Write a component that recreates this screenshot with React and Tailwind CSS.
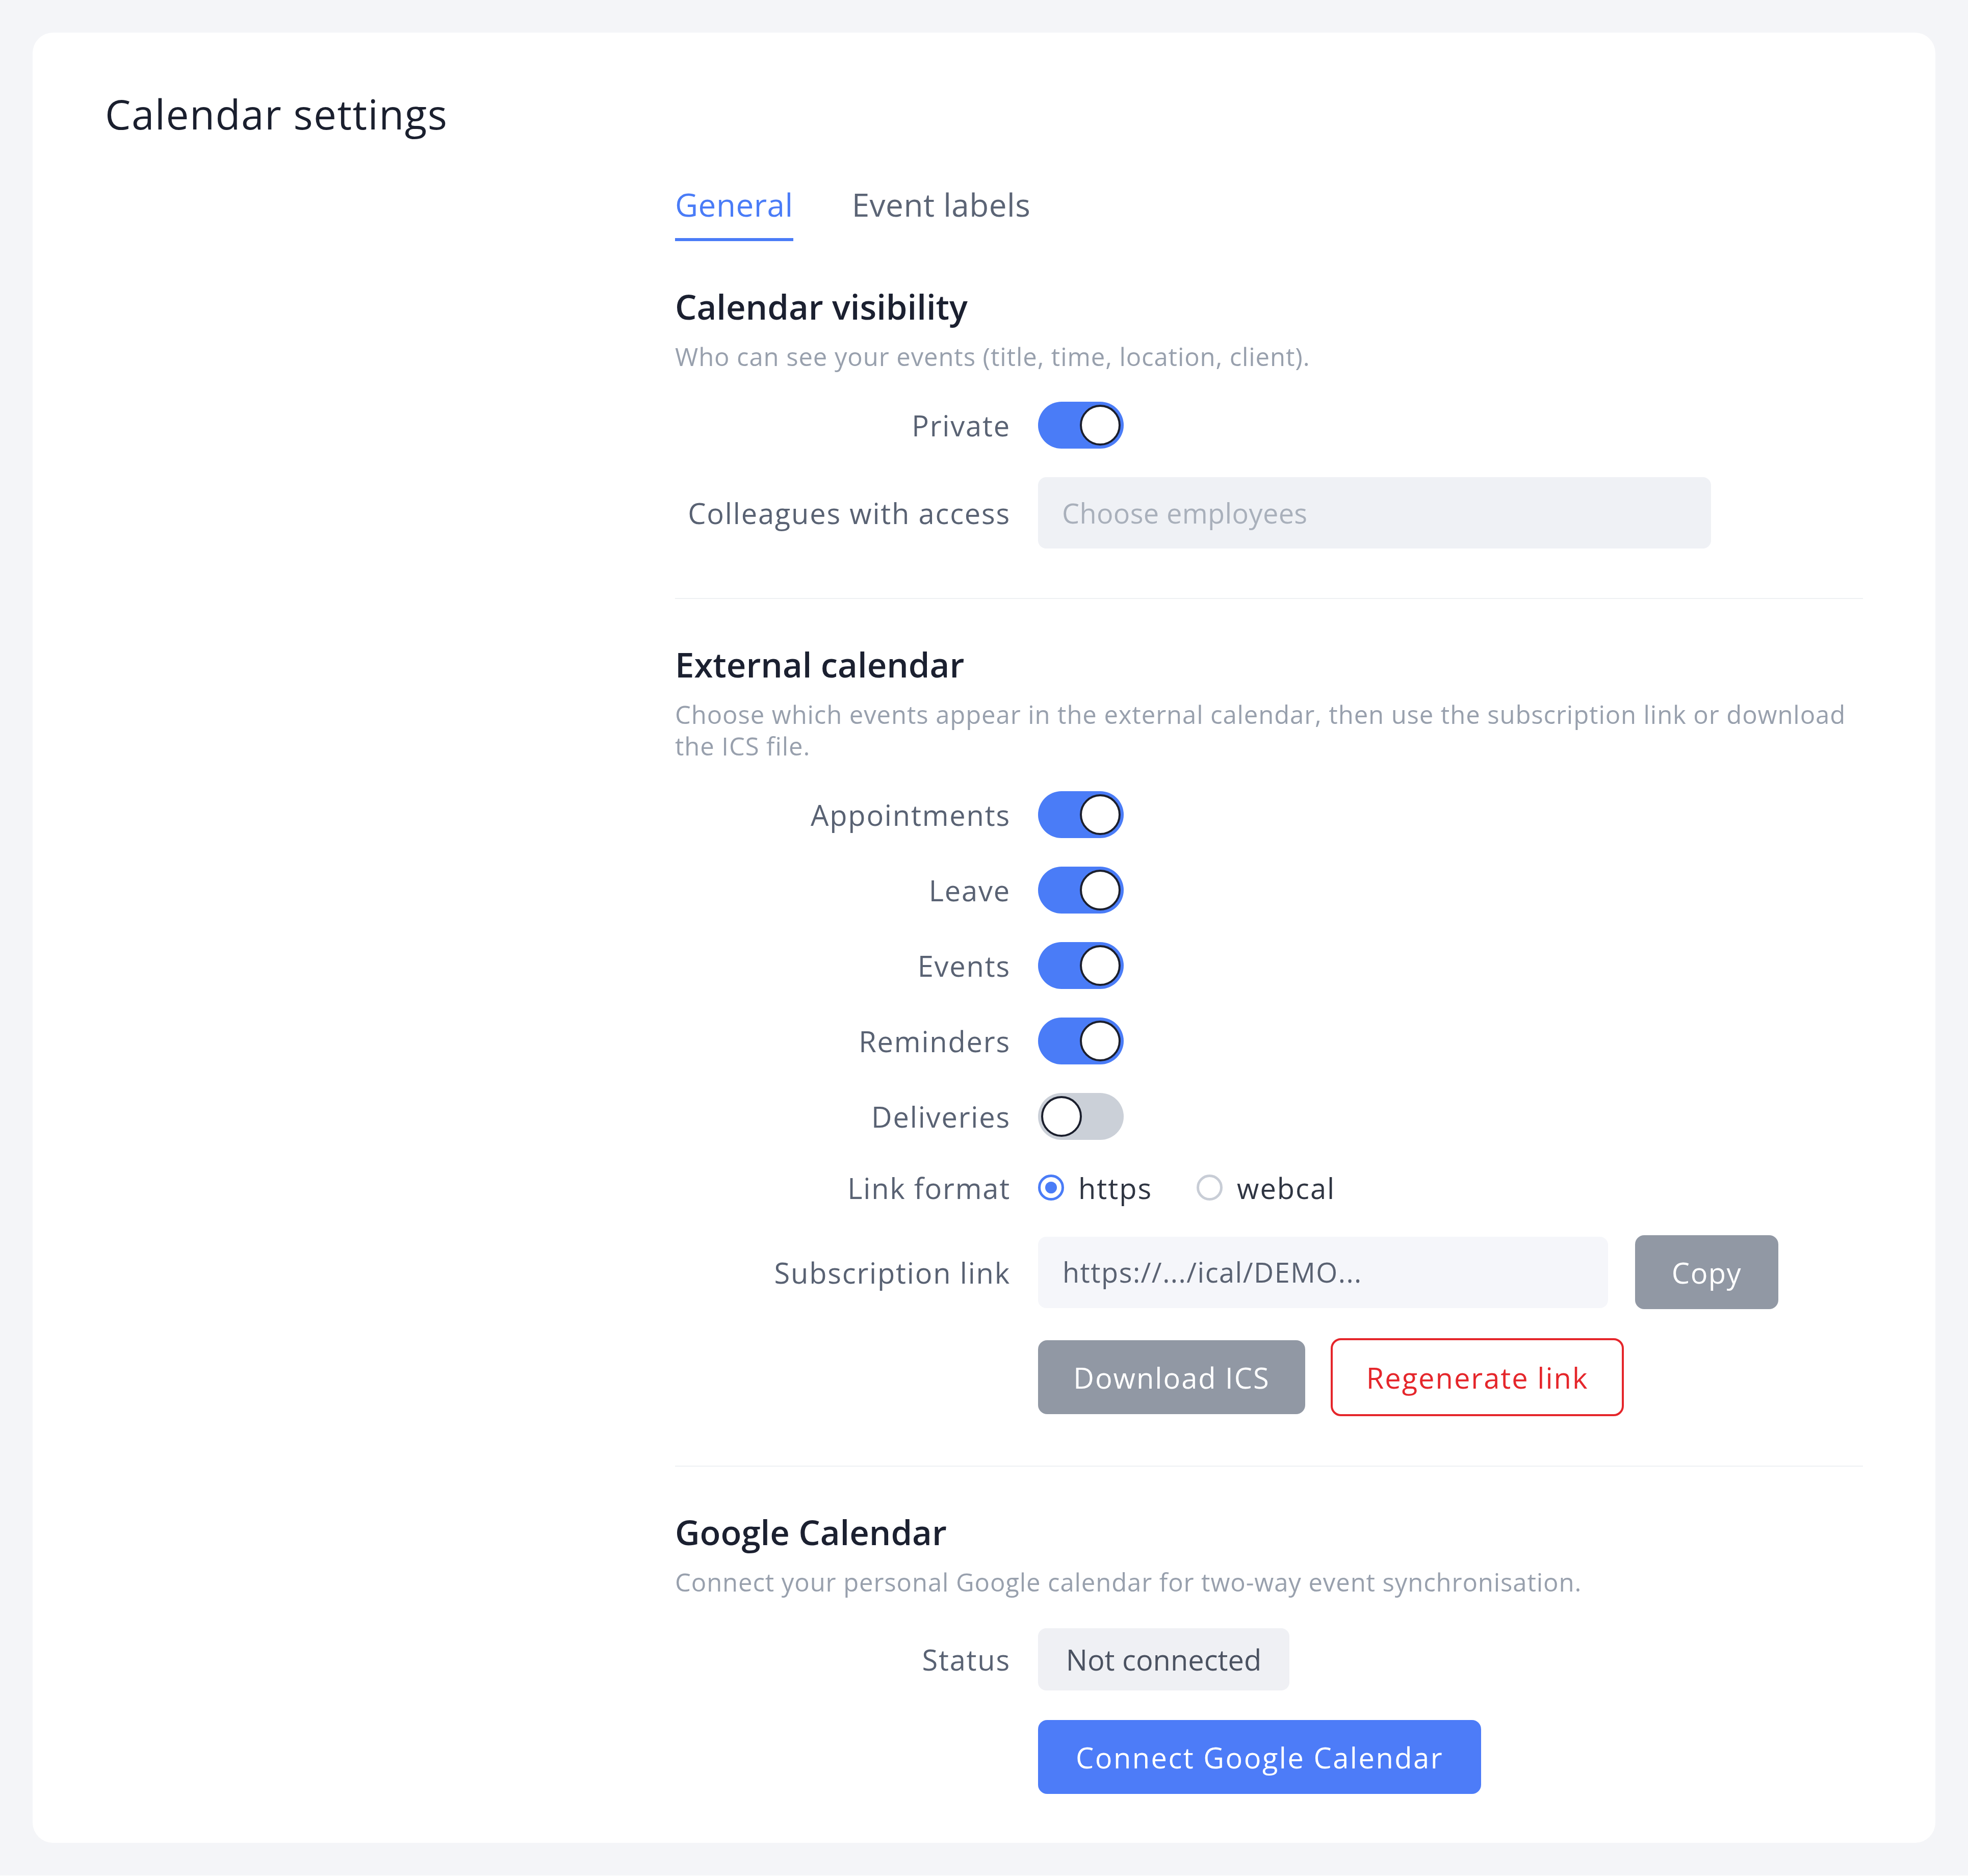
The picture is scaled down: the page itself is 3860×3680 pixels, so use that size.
import React from "react";

function Toggle({ on }) {
  return (
    <div
      className={
        "w-[168px] h-[92px] rounded-full p-[6px] flex items-center " +
        (on ? "bg-[#4a7cf7] justify-end" : "bg-[#cbd0d8] justify-start")
      }
    >
      <div className="w-[80px] h-[80px] rounded-full bg-white border-[4px] border-[#1b1f2d]" />
    </div>
  );
}

function Row({ label, children, className = "" }) {
  return (
    <div className={"flex items-center gap-[54px] " + className}>
      <div className="w-[658px] shrink-0 text-right text-[56px] leading-[68px] tracking-[1.8px] text-[#596273]">
        {label}
      </div>
      <div className="flex items-center">{children}</div>
    </div>
  );
}

function Section({ title, desc, children, last, rowsTop = "mt-[58px]", rowsGap = "gap-[56px]" }) {
  return (
    <section
      className={
        "pt-[88px] " + (last ? "pb-0" : "pb-[97px] border-b-2 border-[#eef0f3]")
      }
    >
      <h2 className="text-[67px] leading-[80px] font-semibold text-[#1b2030]">{title}</h2>
      <p className="mt-[27px] text-[49px] leading-[62px] tracking-[0.9px] text-[#98a0ad]">{desc}</p>
      <div className={"flex flex-col " + rowsTop + " " + rowsGap}>{children}</div>
    </section>
  );
}

function Radio({ checked, label, className = "" }) {
  return (
    <div className={"flex items-center gap-[28px] " + className}>
      {checked ? (
        <div className="w-[51px] h-[51px] rounded-full border-[5px] border-[#4a7cf7] bg-white flex items-center justify-center">
          <div className="w-[23px] h-[23px] rounded-full bg-[#4a7cf7]" />
        </div>
      ) : (
        <div className="w-[51px] h-[51px] rounded-full border-[5px] border-[#c8cdd6] bg-white" />
      )}
      <span className="text-[56px] leading-[68px] tracking-[2px] text-[#2f3542]">{label}</span>
    </div>
  );
}

export default function App() {
  return (
    <div className="bg-[#f4f5f8] p-[64px] font-['Open_Sans','Noto_Sans',sans-serif]">
      <div className="bg-white rounded-[40px] pt-[111px] pb-[96px] px-[142px]">
        <h1 className="text-[80px] leading-[96px] font-medium tracking-[1.5px] text-[#1a1f2e]">
          Calendar settings
        </h1>
        <div className="flex">
          <div className="w-[1118px] shrink-0" />
          <div className="flex-1 min-w-0">
            <div className="mt-[93px] flex items-start gap-[115px]">
              <div className="pb-[28px] border-b-[6px] border-[#4a7cf7] text-[62px] leading-[75px] tracking-[0.5px] text-[#4a7cf7]">
                General
              </div>
              <div className="text-[62px] leading-[75px] tracking-[0.5px] text-[#5b6475]">Event labels</div>
            </div>

            <Section
              title="Calendar visibility"
              desc="Who can see your events (title, time, location, client)."
            >
              <Row label="Private">
                <Toggle on />
              </Row>
              <Row label="Colleagues with access">
                <div className="w-[1320px] h-[140px] rounded-[16px] bg-[#eff1f5] px-[47px] flex items-center text-[54px] tracking-[0.4px] text-[#a9b0bb]">
                  Choose employees
                </div>
              </Row>
            </Section>

            <Section
              title="External calendar"
              desc="Choose which events appear in the external calendar, then use the subscription link or download the ICS file."
            >
              <Row label="Appointments">
                <Toggle on />
              </Row>
              <Row label="Leave">
                <Toggle on />
              </Row>
              <Row label="Events">
                <Toggle on />
              </Row>
              <Row label="Reminders">
                <Toggle on />
              </Row>
              <Row label="Deliveries">
                <Toggle on={false} />
              </Row>
              <Row label="Link format" className="h-[75px]">
                <Radio checked label="https" className="w-[311px]" />
                <Radio label="webcal" />
              </Row>
              <div className="flex flex-col gap-[57px]">
                <Row label="Subscription link">
                  <div className="flex items-center gap-[53px]">
                    <div className="w-[1118px] h-[140px] rounded-[16px] bg-[#f5f6fa] px-[48px] flex items-center text-[54px] tracking-[1.5px] text-[#5a6272]">
                      https://.../ical/DEMO...
                    </div>
                    <button className="w-[281px] h-[145px] rounded-[18px] bg-[#9198a4] text-white text-[56px] tracking-[1.5px] flex items-center justify-center">
                      Copy
                    </button>
                  </div>
                </Row>
                <Row label="">
                  <div className="flex items-center gap-[50px]">
                    <button className="w-[524px] h-[145px] rounded-[18px] bg-[#9198a4] text-white text-[56px] tracking-[2px] flex items-center justify-center">
                      Download ICS
                    </button>
                    <button className="w-[575px] h-[153px] rounded-[20px] border-[4px] border-[#e5262b] bg-white text-[#e5262b] text-[56px] tracking-[2px] flex items-center justify-center">
                      Regenerate link
                    </button>
                  </div>
                </Row>
              </div>
            </Section>

            <Section
              title="Google Calendar"
              desc="Connect your personal Google calendar for two-way event synchronisation."
              last
              rowsTop="mt-[60px]"
              rowsGap="gap-[58px]"
            >
              <Row label="Status">
                <div className="w-[493px] h-[122px] rounded-[16px] bg-[#eff0f4] flex items-center justify-center text-[56px] text-[#4b5261]">
                  Not connected
                </div>
              </Row>
              <Row label="">
                <button className="w-[869px] h-[145px] rounded-[18px] bg-[#4d7cf8] text-white text-[56px] tracking-[2.5px] flex items-center justify-center">
                  Connect Google Calendar
                </button>
              </Row>
            </Section>
          </div>
        </div>
      </div>
    </div>
  );
}
